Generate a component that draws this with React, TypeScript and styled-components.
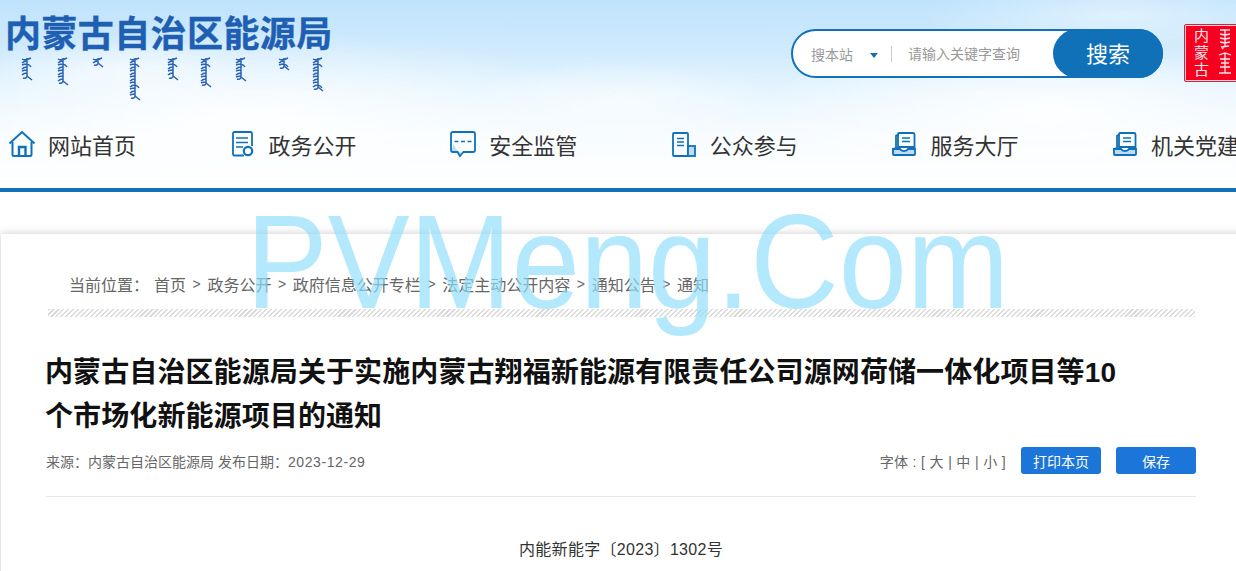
import React from 'react'
import styled, { createGlobalStyle } from 'styled-components'

const GlobalStyle = createGlobalStyle`
  html, body {
    margin: 0;
    padding: 0;
    background: #fff;
    overflow: hidden;
  }
  body {
    font-family: "Liberation Sans", "Noto Sans CJK SC", sans-serif;
    color: #333;
  }
`

const BLUE = '#1071b8'

const scripts = [
  { x: 22, h: 23 },
  { x: 58, h: 28 },
  { x: 93, h: 10 },
  { x: 130, h: 43 },
  { x: 168, h: 23 },
  { x: 201, h: 30 },
  { x: 236, h: 24 },
  { x: 279, h: 13 },
  { x: 313, h: 34 },
]

// one vertical word of the logo's script: stem, teeth, and a tail at the foot
const scriptPath = (x: number, h: number) => {
  let d = `M${x - 5} 2q3 2 9 -1M${x} 1V${h - 3}`
  for (let y = 4; y < h - 4; y += 3) {
    d += `M${x} ${y}q-3 0 -5 ${y % 2 ? 1 : 2}`
    if (y % 7 === 0) d += `M${x} ${y}q3 1 4 3`
  }
  d += `M${x} ${h - 3}q-2 2 -4 1M${x} ${h - 4}l5 4`
  return d
}

const MongolianLine = () => (
  <svg width="330" height="46" viewBox="0 0 330 46" style={{ display: 'block' }}>
    {scripts.map((s) => (
      <path key={s.x} d={scriptPath(s.x, s.h)} fill="none" stroke="#2a62b4" strokeWidth="1.5" />
    ))}
  </svg>
)

const SealScript = () => (
  <svg width="16" height="50" viewBox="0 0 16 50" fill="none" stroke="#ffe6ea" strokeWidth="1.3">
    <path d="M3 2h10M8 2v16M3 6l5 1 5-1M3 10l5 1 5-1M3 14l5 1 5-1M4 19l8-1M8 18l-3 3" />
    <path d="M2 27l6-2 6 2M8 25v20M3 31h10M4 35h8M3 39h10M2 45h12" />
  </svg>
)

const HomeIcon = () => (
  <svg width="28" height="28" viewBox="0 0 28 28" fill="none" stroke={BLUE} strokeWidth="2">
    <path d="M1.5 13.500 14 2l12.500 11.500" />
    <path d="M4.500 12v12.500q0 1.500 1.500 1.500h16q1.500 0 1.500-1.500V12" />
    <path d="M11 25v-8h6.500v8" strokeWidth="2.400" />
  </svg>
)

const DocIcon = () => (
  <svg width="22" height="26" viewBox="0 0 22 26" fill="none" stroke={BLUE} strokeWidth="1.800">
    <path d="M12 24.500H2.500q-1.500 0-1.500-1.500V2.500q0-1.500 1.500-1.500h16q1.500 0 1.500 1.500V15" />
    <path d="M4 7h12M4 11.500h12M4 16h7" strokeWidth="1.500" />
    <circle cx="16" cy="20" r="4.200" strokeWidth="2.200" />
  </svg>
)

const ChatIcon = () => (
  <svg width="26" height="27" viewBox="0 0 26 27" fill="none" stroke={BLUE} strokeWidth="1.800">
    <path d="M4 13q1 7 9 9l-3 1-1 2-2-3H3q-2 0-2-2z" fill="#bfdcf3" stroke="none" />
    <path d="M3 1h20q2 0 2 2v16q0 2-2 2H13.500L10 25l-2.500-4H3q-2 0-2-2V3q0-2 2-2z" />
    <path d="M4.500 10.500h4M11 10.500h4M17.500 10.500h4" strokeWidth="1.500" />
  </svg>
)

const ReportIcon = () => (
  <svg width="24" height="25" viewBox="0 0 24 25" fill="none" stroke={BLUE} strokeWidth="1.800">
    <path d="M16 24H2q-1 0-1-1V2q0-1 1-1h13q1 0 1 1z" />
    <path d="M5 6.500h7M5 10h7M5 13.500h7" strokeWidth="1.600" />
    <rect x="16" y="14" width="7" height="10" fill="#bfdcf3" />
  </svg>
)

const BookIcon = () => (
  <svg width="24" height="24" viewBox="0 0 24 24" fill="none" stroke={BLUE} strokeWidth="1.800">
    <path d="M1 21v-4l3-1V4q0-1 3-1" />
    <path d="M7 1h14q1.500 0 1.500 1.500V15H6V2q0-1 1-1z" />
    <path d="M10 6h8M10 9.500h8" strokeWidth="1.600" />
    <path d="M1 17h7q1 2 4 2t4-2h7v5q0 1-1 1H2q-1 0-1-1z" fill="#bfdcf3" />
  </svg>
)

const navItems = [
  { label: '网站首页', icon: <HomeIcon />, inset: 0 },
  { label: '政务公开', icon: <DocIcon />, inset: 3 },
  { label: '安全监管', icon: <ChatIcon />, inset: 1 },
  { label: '公众参与', icon: <ReportIcon />, inset: 2 },
  { label: '服务大厅', icon: <BookIcon />, inset: 2 },
  { label: '机关党建', icon: <BookIcon />, inset: 2 },
]

const crumbs = ['首页', '政务公开', '政府信息公开专栏', '法定主动公开内容', '通知公告', '通知']

const App: React.FC = () => {
  return (
    <Page>
      <GlobalStyle />
      <Header>
        <TopRow>
          <Logo>
            <LogoTitle>内蒙古自治区能源局</LogoTitle>
            <MongolianLine />
          </Logo>
          <SearchBox>
            <ScopeLabel>搜本站</ScopeLabel>
            <ScopeArrow />
            <SearchDivider />
            <SearchHint>请输入关键字查询</SearchHint>
            <SearchButton>搜索</SearchButton>
          </SearchBox>
          <Seal>
            <SealText>内蒙古</SealText>
            <SealScript />
          </Seal>
        </TopRow>
        <Nav>
          {navItems.map((item) => (
            <NavItem key={item.label}>
              <NavIcon $inset={item.inset}>{item.icon}</NavIcon>
              <NavLabel>{item.label}</NavLabel>
            </NavItem>
          ))}
        </Nav>
      </Header>

      <Card>
        <Crumbs>
          <CrumbLead>当前位置：</CrumbLead>
          {crumbs.map((c, i) => (
            <React.Fragment key={c}>
              {i > 0 && <CrumbSep>&gt;</CrumbSep>}
              <span>{c}</span>
            </React.Fragment>
          ))}
        </Crumbs>
        <Hatch />
        <Title>内蒙古自治区能源局关于实施内蒙古翔福新能源有限责任公司源网荷储一体化项目等10个市场化新能源项目的通知</Title>
        <MetaRow>
          <MetaText>
            来源：内蒙古自治区能源局 发布日期：<MetaDate>2023-12-29</MetaDate>
          </MetaText>
          <MetaTools>
            <FontSwitch>字体 : [ 大 | 中 | 小 ]</FontSwitch>
            <ActionButton>打印本页</ActionButton>
            <ActionButton>保存</ActionButton>
          </MetaTools>
        </MetaRow>
        <DocNumber>内能新能字〔2023〕1302号</DocNumber>
      </Card>

      <Watermark>PVMeng.Com</Watermark>
    </Page>
  )
}

const Page = styled.div`
  position: relative;
  width: 1236px;
  height: 571px;
  overflow: hidden;
  background: #fff;
`

const Header = styled.header`
  height: 188px;
  border-bottom: 4px solid ${BLUE};
  background:
    radial-gradient(ellipse 360px 90px at 250px 120px, rgba(255, 255, 255, 0.9), rgba(255, 255, 255, 0) 100%),
    radial-gradient(ellipse 300px 70px at 1050px 110px, rgba(255, 255, 255, 0.9), rgba(255, 255, 255, 0) 100%),
    radial-gradient(ellipse 160px 40px at 620px 100px, rgba(255, 255, 255, 0.6), rgba(255, 255, 255, 0) 100%),
    radial-gradient(ellipse 130px 35px at 120px 70px, rgba(255, 255, 255, 0.5), rgba(255, 255, 255, 0) 100%),
    radial-gradient(ellipse 200px 40px at 1120px 15px, rgba(255, 255, 255, 0.45), rgba(255, 255, 255, 0) 100%),
    linear-gradient(180deg, #bfe3fc 0%, #cfeafd 25%, #e6f5fe 50%, #f8fcff 72%, #ffffff 100%);
`

const TopRow = styled.div`
  display: flex;
  align-items: flex-start;
  height: 109px;
  padding-left: 5px;
`

const Logo = styled.div`
  flex: 1;
  padding-top: 14px;
`

const LogoTitle = styled.div`
  font-size: 36px;
  line-height: 42px;
  font-weight: 700;
  letter-spacing: 0.4px;
  color: #1e5fb4;
  -webkit-text-stroke: 0.4px #1e5fb4;
  margin-bottom: 1px;
`

const SearchBox = styled.div`
  display: flex;
  align-items: center;
  box-sizing: border-box;
  width: 372px;
  height: 49px;
  margin-top: 29px;
  padding-left: 18px;
  background: #fff;
  border: 2px solid ${BLUE};
  border-radius: 25px;
  position: relative;
`

const ScopeLabel = styled.span`
  font-size: 14px;
  color: #999;
`

const ScopeArrow = styled.i`
  width: 0;
  height: 0;
  margin: 3px 0 0 17px;
  border-left: 4.5px solid transparent;
  border-right: 4.5px solid transparent;
  border-top: 5px solid ${BLUE};
`

const SearchDivider = styled.i`
  width: 1px;
  height: 16px;
  margin-left: 13px;
  background: #ccc;
`

const SearchHint = styled.span`
  margin: -2px 0 0 16px;
  font-size: 14px;
  color: #999;
`

const SearchButton = styled.div`
  position: absolute;
  top: -2px;
  right: -2px;
  width: 110px;
  height: 49px;
  border-radius: 25px;
  background: ${BLUE};
  color: #fff;
  font-size: 22px;
  line-height: 51px;
  text-align: center;
`

const Seal = styled.div`
  display: flex;
  flex-shrink: 0;
  gap: 9px;
  box-sizing: border-box;
  width: 60px;
  height: 58px;
  margin: 24px -8px 0 21px;
  padding: 3px 0 0 8px;
  background: #f5001f;
  border: 1px solid #d81f3c;
  border-radius: 2px;
  box-shadow: inset 0 0 0 1px #ffd7dd;
`

const SealText = styled.div`
  writing-mode: vertical-rl;
  flex-shrink: 0;
  width: 15px;
  height: 54px;
  font-size: 15px;
  line-height: 15px;
  letter-spacing: 2px;
  color: #ffe6ea;
`

const Nav = styled.nav`
  display: flex;
  padding-left: 8px;
  height: 79px;
`

const NavItem = styled.div`
  display: flex;
  align-items: center;
  flex: 0 0 220.6px;
  height: 70px;
`

const NavIcon = styled.span<{ $inset: number }>`
  display: flex;
  box-sizing: border-box;
  width: 40px;
  padding-left: ${(p) => p.$inset}px;
`

const NavLabel = styled.span`
  font-size: 22px;
  color: #333;
  white-space: nowrap;
`

const Card = styled.main`
  box-sizing: border-box;
  width: 1260px;
  height: 400px;
  margin: 42px 0 0 1px;
  padding: 31px 0 0 45px;
  background: #fff;
  box-shadow: 0 0 8px rgba(0, 0, 0, 0.22);
`

const Crumbs = styled.div`
  display: flex;
  align-items: center;
  height: 38px;
  padding-left: 23px;
  font-size: 16px;
  color: #666;
`

const CrumbLead = styled.span`
  width: 85px;
`

const CrumbSep = styled.span`
  width: 21.4px;
  text-align: center;
  font-size: 14px;
`

const Hatch = styled.div`
  width: 1147px;
  height: 8px;
  margin: 6px 0 0 2px;
  background: repeating-linear-gradient(135deg, #dcdcdc 0 1.5px, #fff 1.5px 3.5px);
`

const Title = styled.h1`
  width: 1090px;
  margin: 34px 0 0 -1px;
  font-size: 28px;
  line-height: 44px;
  font-weight: 700;
  letter-spacing: 0.1px;
  color: #111;
`

const MetaRow = styled.div`
  display: flex;
  align-items: center;
  justify-content: space-between;
  box-sizing: border-box;
  width: 1150px;
  height: 53px;
  margin-top: 5px;
  padding-bottom: 19px;
  border-bottom: 1px solid #e6e6e6;
`

const MetaText = styled.span`
  font-size: 14px;
  color: #666;
`

const MetaDate = styled.span`
  letter-spacing: 0.6px;
`

const MetaTools = styled.div`
  display: flex;
  align-items: center;
`

const FontSwitch = styled.span`
  margin-right: 15px;
  font-size: 14px;
  letter-spacing: 0.35px;
  color: #666;
`

const ActionButton = styled.button`
  width: 80px;
  height: 27px;
  margin-left: 15px;
  padding: 0;
  border: none;
  border-radius: 3px;
  background: #1c75d8;
  color: #fff;
  font-family: inherit;
  font-size: 14px;
  &:first-of-type {
    margin-left: 0;
  }
`

const DocNumber = styled.p`
  width: 1150px;
  margin: 41px 0 0;
  font-size: 16px;
  line-height: 24px;
  letter-spacing: 0.3px;
  color: #333;
  text-align: center;
`

const Watermark = styled.div`
  position: absolute;
  left: 246px;
  top: 187px;
  font-family: "Liberation Sans", sans-serif;
  font-size: 134px;
  line-height: 150px;
  color: rgba(145, 222, 252, 0.68);
  white-space: nowrap;
  transform: scaleX(0.915);
  transform-origin: left top;
  pointer-events: none;
`

export default App
